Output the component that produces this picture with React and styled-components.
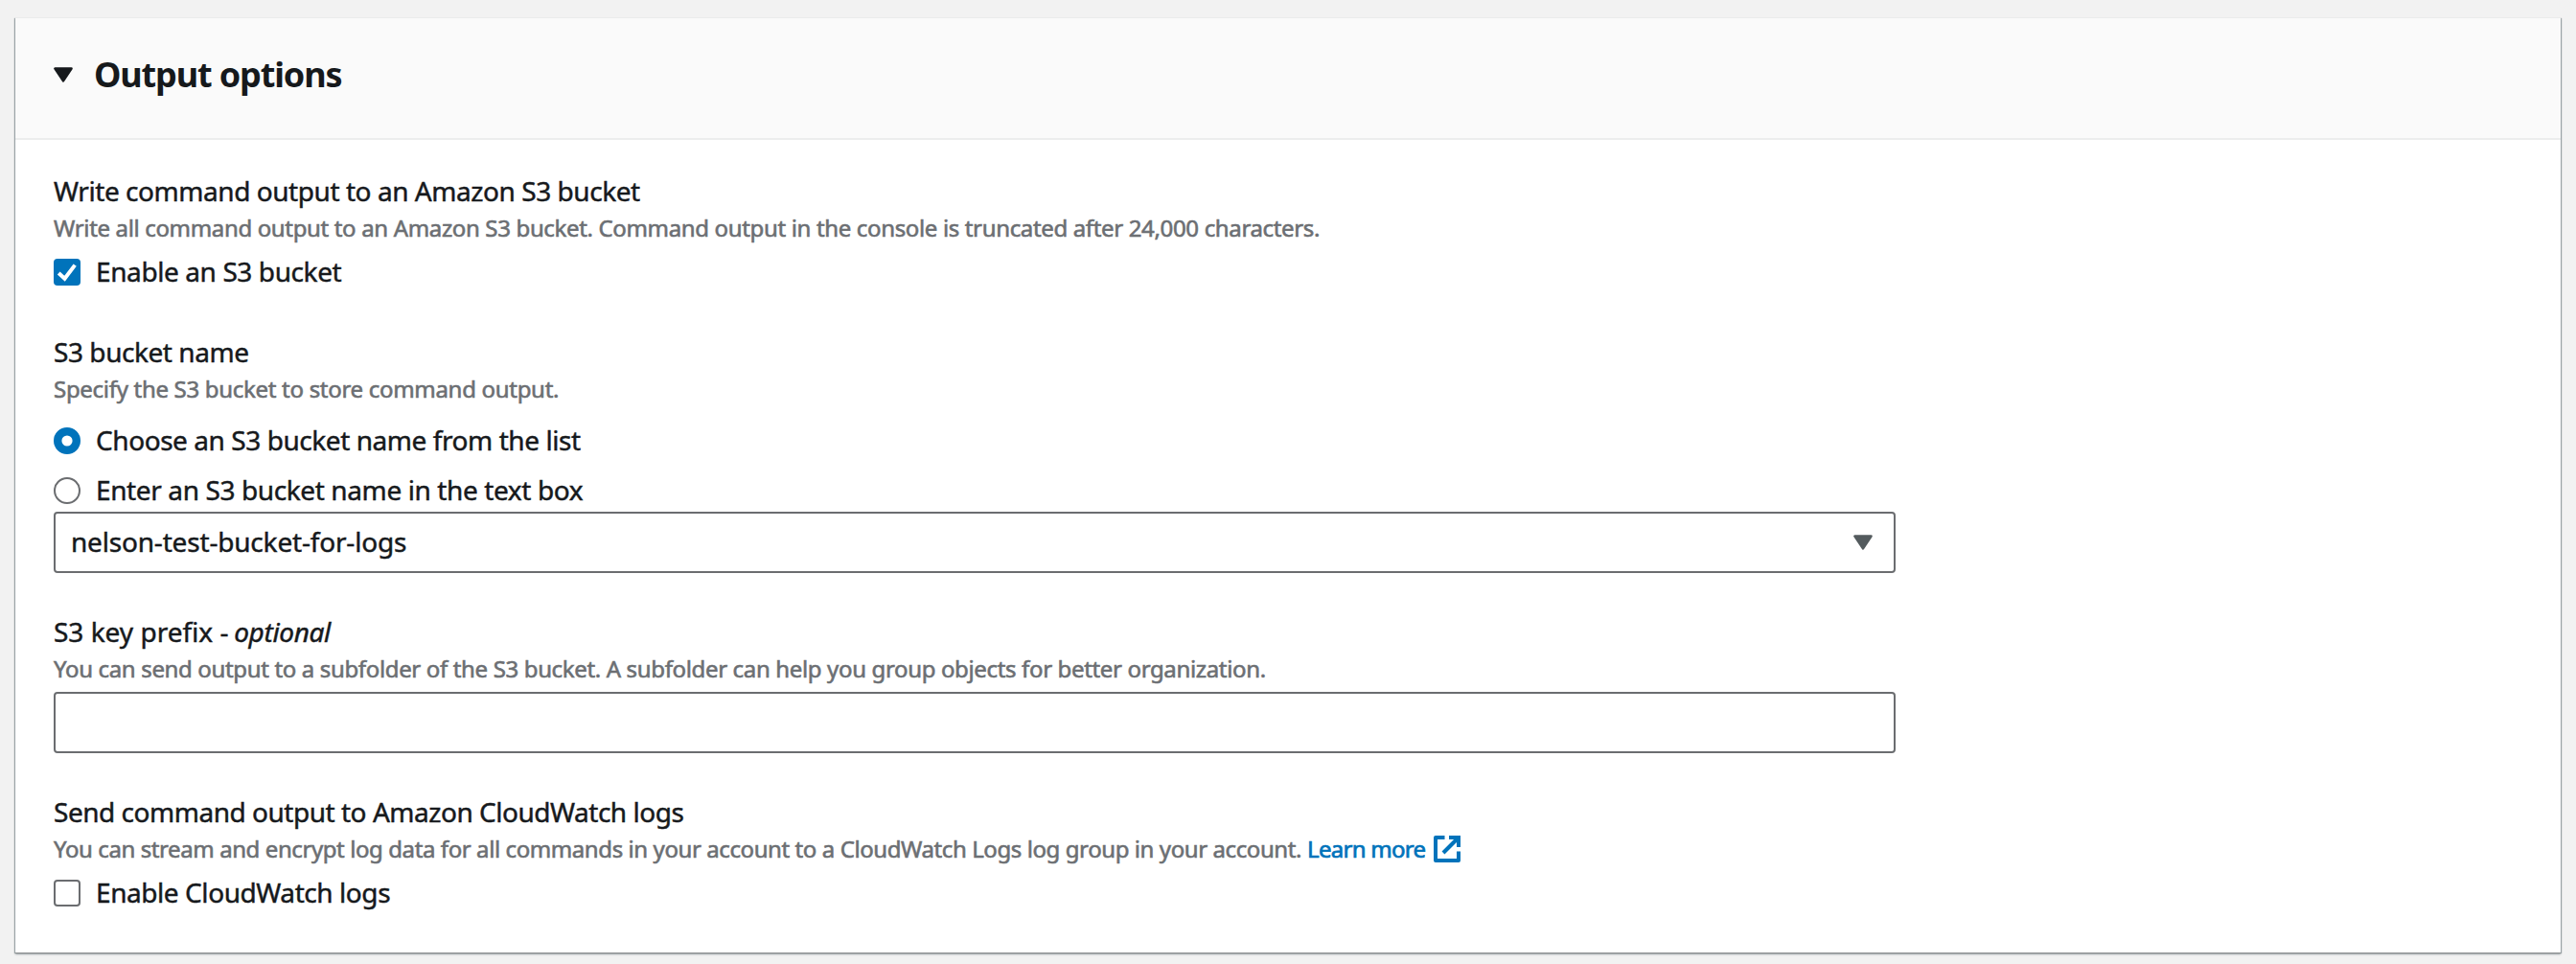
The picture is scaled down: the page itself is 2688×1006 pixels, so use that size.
import React, { useState } from "react";
import styled, { createGlobalStyle } from "styled-components";

const colors = {
  text: "#16191c",
  muted: "#6c6f73",
  border: "#6b6d70",
  link: "#0073bb",
};

const GlobalStyle = createGlobalStyle`
  *, *::before, *::after { box-sizing: border-box; }
  body {
    margin: 0;
    background: #f2f2f2;
    color: ${colors.text};
    font-family: "Noto Sans", "Open Sans", sans-serif;
  }
`;

const Page = styled.main`
  height: 1006px;
  padding: 18px 16px 0;
  overflow: hidden;
`;

const Card = styled.section`
  height: 976px;
  background: #fff;
  box-shadow:
    0 1px 0 0 #8b8e8f,
    0 2px 2px 0 rgba(0, 28, 36, 0.3),
    1px 1px 1px 0 rgba(0, 28, 36, 0.3),
    -1px 1px 1px 0 rgba(0, 28, 36, 0.3);
`;

const Header = styled.header`
  display: flex;
  align-items: flex-start;
  gap: 22px;
  height: 128px;
  padding: 37px 40px 0;
  border-top: 1px solid #eaebeb;
  border-bottom: 2px solid #eceded;
  background: #fafafa;
`;

const Title = styled.h2`
  margin: 0;
  font-size: 36px;
  line-height: 44px;
  font-weight: 700;
  letter-spacing: -1.13px;
`;

const Caret = styled.svg`
  display: block;
  flex: none;
  width: 20px;
  height: 16px;
  margin-top: ${(p) => p.$drop || 0}px;
  fill: ${(p) => p.$color};
  stroke: ${(p) => p.$color};
  stroke-width: 2.6px;
  stroke-linejoin: round;
`;

const Body = styled.div`
  display: flex;
  flex-direction: column;
  gap: 39px;
  width: 2002px;
  padding: 31px 40px 0;
`;

const Field = styled.div`
  display: flex;
  flex-direction: column;
`;

const Label = styled.div`
  font-size: 28px;
  line-height: 44px;
  white-space: pre;
  letter-spacing: ${(p) => p.$track}px;
  -webkit-text-stroke: 0.45px ${colors.text};
`;

const Optional = styled.em`
  margin-left: -1.5px;
  letter-spacing: -0.35px;
`;

const Hint = styled.div`
  display: flex;
  height: 34px;
  font-size: 24px;
  line-height: 34px;
  white-space: pre;
  color: ${colors.muted};
  letter-spacing: ${(p) => p.$track}px;
  -webkit-text-stroke: 0.6px currentColor;
`;

const Link = styled.a`
  display: flex;
  gap: 9px;
  margin-left: 6px;
  color: ${colors.link};
  letter-spacing: -0.72px;
  text-decoration: none;
  -webkit-text-stroke: 0.7px currentColor;
`;

const ExternalSvg = styled.svg`
  display: block;
  width: 28px;
  height: 28px;
  margin-top: 3px;
  fill: none;
  stroke: ${colors.link};
  stroke-width: 4px;
`;

const Choice = styled.label`
  display: flex;
  align-items: flex-start;
  gap: 16px;
  height: ${(p) => p.$height || 45}px;
  margin-top: ${(p) => p.$top}px;
`;

const Control = styled.svg`
  display: block;
  flex: none;
  width: 28px;
  height: 28px;
  margin-top: 9px;
`;

const box = `
  width: 1922px;
  height: 64px;
  border: 2px solid ${colors.border};
  border-radius: 4px;
  background: #fff;
`;

const Select = styled.div`
  ${box}
  display: flex;
  align-items: flex-start;
  justify-content: space-between;
  margin-top: 1px;
  padding: 7px 22px 0 16px;
`;

const TextInput = styled.input`
  ${box}
  display: block;
  margin-top: 7px;
  padding: 0 16px;
  font: inherit;
  font-size: 28px;
  outline: none;
`;

function DownCaret({ color, drop }) {
  return (
    <Caret viewBox="0 0 20 16" $color={color} $drop={drop}>
      <path d="M1.5 1.5h17L10 14.3z" />
    </Caret>
  );
}

function Checkbox({ checked }) {
  return (
    <Control viewBox="0 0 28 28">
      {checked ? (
        <>
          <rect width="28" height="28" rx="4" fill={colors.link} />
          <path d="M5.2 15l6.3 5.8L22.2 6.6" fill="none" stroke="#fff" strokeWidth="4" />
        </>
      ) : (
        <rect x="1" y="1" width="26" height="26" rx="3" fill="#fff" stroke={colors.border} strokeWidth="2" />
      )}
    </Control>
  );
}

function Radio({ checked }) {
  return (
    <Control viewBox="0 0 28 28">
      {checked ? (
        <circle cx="14" cy="14" r="9.8" fill="#fff" stroke={colors.link} strokeWidth="8.4" />
      ) : (
        <circle cx="14" cy="14" r="13" fill="#fff" stroke={colors.border} strokeWidth="2" />
      )}
    </Control>
  );
}

function ExternalIcon() {
  return (
    <ExternalSvg viewBox="0 0 28 28">
      <path d="M11.5 2H2v24h24V16.5" strokeLinejoin="round" />
      <path d="M16 2h10v10" />
      <path d="M26 2L10 18" />
    </ExternalSvg>
  );
}

export default function App() {
  const [source, setSource] = useState("list");
  return (
    <>
      <GlobalStyle />
      <Page>
        <Card>
          <Header>
            <DownCaret color={colors.text} drop={14} />
            <Title>Output options</Title>
          </Header>
          <Body>
            <Field>
              <Label $track={-0.445}>Write command output to an Amazon S3 bucket</Label>
              <Hint $track={-0.346}>
                Write all command output to an Amazon S3 bucket. Command output in the console is truncated after 24,000 characters.
              </Hint>
              <Choice $top={6}>
                <Checkbox checked />
                <Label $track={-0.4}>Enable an S3 bucket</Label>
              </Choice>
            </Field>

            <Field>
              <Label $track={-0.44}>S3 bucket name</Label>
              <Hint $track={-0.3}>Specify the S3 bucket to store command output.</Hint>
              <Choice $top={14} $height={44} onClick={() => setSource("list")}>
                <Radio checked={source === "list"} />
                <Label $track={-0.435}>Choose an S3 bucket name from the list</Label>
              </Choice>
              <Choice $top={8} $height={44} onClick={() => setSource("text")}>
                <Radio checked={source === "text"} />
                <Label $track={-0.385}>Enter an S3 bucket name in the text box</Label>
              </Choice>
              <Select>
                <Label $track={-0.185}>nelson-test-bucket-for-logs</Label>
                <DownCaret color="#545b5e" drop={15} />
              </Select>
            </Field>

            <Field>
              <Label $track={0}>
                S3 key prefix - <Optional>optional</Optional>
              </Label>
              <Hint $track={-0.35}>
                You can send output to a subfolder of the S3 bucket. A subfolder can help you group objects for better organization.
              </Hint>
              <TextInput type="text" />
            </Field>

            <Field>
              <Label $track={-0.475}>Send command output to Amazon CloudWatch logs</Label>
              <Hint $track={-0.411}>
                You can stream and encrypt log data for all commands in your account to a CloudWatch Logs log group in your account.
                <Link>
                  Learn more
                  <ExternalIcon />
                </Link>
              </Hint>
              <Choice $top={6}>
                <Checkbox />
                <Label $track={-0.43}>Enable CloudWatch logs</Label>
              </Choice>
            </Field>
          </Body>
        </Card>
      </Page>
    </>
  );
}
